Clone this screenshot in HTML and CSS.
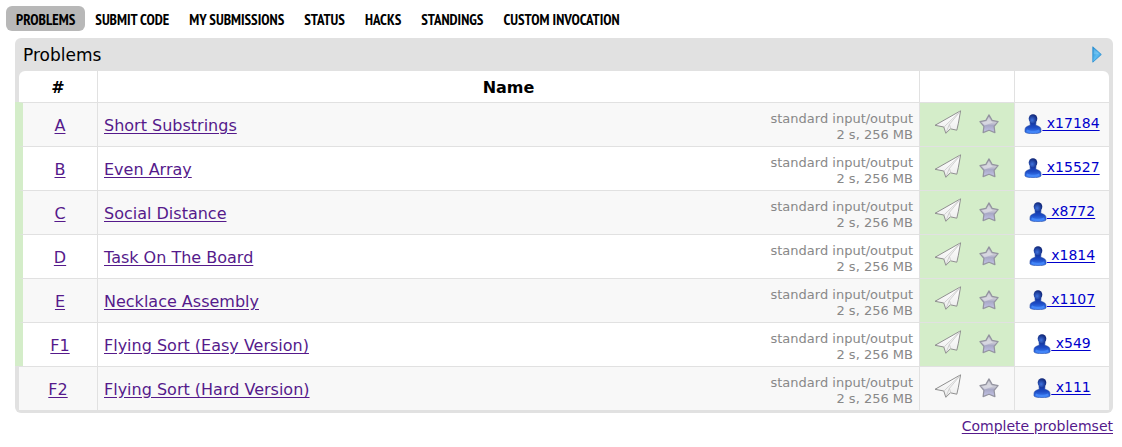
FILE: index.html
```html
<!DOCTYPE html>
<html lang="en">
<head>
<meta charset="utf-8">
<title>Problems</title>
<link rel="stylesheet" href="styles.css">
</head>
<body>
<svg class="sprites" aria-hidden="true">
  <defs>
    <linearGradient id="paper" x1="0" y1="0" x2="0" y2="1">
      <stop offset="0" stop-color="#fff"/><stop offset="1" stop-color="#ececec"/>
    </linearGradient>
    <linearGradient id="metal" x1="0" y1="0" x2="0" y2="1">
      <stop offset="0" stop-color="#b0b0ba"/><stop offset=".45" stop-color="#c9c9d4"/><stop offset=".6" stop-color="#a9a9c6"/><stop offset="1" stop-color="#c4c4e8"/>
    </linearGradient>
    <linearGradient id="body" x1="0" y1="0" x2="0" y2="1">
      <stop offset="0" stop-color="#10309a"/><stop offset=".5" stop-color="#1d4cc6"/><stop offset="1" stop-color="#3f86fb"/>
    </linearGradient>
    <radialGradient id="head" cx=".4" cy=".65" r=".65">
      <stop offset="0" stop-color="#3f72de"/><stop offset="1" stop-color="#0d2274"/>
    </radialGradient>
    <linearGradient id="sky" x1="0" y1="0" x2="1" y2="1">
      <stop offset="0" stop-color="#1d86cc"/><stop offset=".5" stop-color="#5cbcf2"/><stop offset="1" stop-color="#2f97dc"/>
    </linearGradient>
  </defs>
  <symbol id="plane" viewBox="0 0 28 24">
    <path d="M26.6.8 1 15.3l8.8 1.7 2 6.3 4.6-4.5 6.4 1.4 1.6-7z" fill="url(#paper)" stroke="#8f8f8f" stroke-linejoin="round"/>
    <path d="M26 1.5 10.2 16.8M25.8 2 15.4 14.4l1.4 4.3M15.4 14.4l-3.2 7.8" fill="none" stroke="#c6c6c6" stroke-width=".8"/>
  </symbol>
  <symbol id="star" viewBox="0 0 20 20">
    <path d="m10 .9 3.1 5.5 6 1.2-4 4.8.8 6.2-5.9-2.3-5.9 2.3.8-6.2-4-4.8 6-1.2z" fill="url(#metal)" stroke="#9494a0" stroke-width="1.2" stroke-linejoin="round"/>
    <path d="M9.8 3.2 7.6 7.3 3.2 8.4l2.4 3 8.4-3-2-1.3z" fill="#e6e6ec" opacity=".55"/>
  </symbol>
  <symbol id="user" viewBox="0 0 18 20">
    <path d="M6 7.5h6l-.2 3.8c3 .7 5.2 2 5.2 4.4V18c-1.8 2.3-14.2 2.3-16 0v-2.3c0-2.4 2.2-3.7 5.2-4.4z" fill="url(#body)" stroke="#2448a4" stroke-width=".6"/>
    <path d="M3.2 15.5C6 17.2 12 17.2 14.8 15.5c1 1 .8 2 0 2.5-2.8 1.2-8.8 1.2-11.6 0-.8-.5-1-1.5 0-2.5z" fill="#4d90ff" opacity=".65"/>
    <ellipse cx="9" cy="4.8" rx="4.3" ry="4.6" fill="url(#head)"/>
  </symbol>
  <symbol id="arrow" viewBox="0 0 10 17">
    <path d="M.8.8v15.4L9.3 8.5z" fill="url(#sky)" stroke="#3293d3" stroke-width=".9" stroke-linejoin="round"/>
    <path d="M1.7 2.7v5.6h5.6z" fill="#8dd2f8" opacity=".45"/>
  </symbol>
</svg>
<nav class="menu">
  <a class="current" href="#">PROBLEMS</a>
  <a href="#">SUBMIT CODE</a>
  <a href="#">MY SUBMISSIONS</a>
  <a href="#">STATUS</a>
  <a href="#">HACKS</a>
  <a href="#">STANDINGS</a>
  <a href="#">CUSTOM INVOCATION</a>
</nav>
<main>
  <section class="datatable">
    <header class="caption">
      <span>Problems</span>
      <button type="button" aria-label="Filter"><svg class="arrow"><use href="#arrow"/></svg></button>
    </header>
    <table>
      <colgroup><col class="col-id"><col><col class="col-actions"><col class="col-solved"></colgroup>
      <thead><tr><th>#</th><th>Name</th><th></th><th></th></tr></thead>
      <tbody>
        <tr class="accepted">
          <td class="id"><a href="#">A</a></td>
          <td><div class="name"><a href="#">Short Substrings</a><div class="limits">standard input/output<br>2 s, 256 MB</div></div></td>
          <td class="act"><div class="actions"><button type="button" aria-label="Submit"><svg class="plane"><use href="#plane"/></svg></button><button type="button" aria-label="Favourite"><svg class="star"><use href="#star"/></svg></button></div></td>
          <td class="solved"><a href="#"><svg class="user"><use href="#user"/></svg>&nbsp;x17184</a></td>
        </tr>
        <tr class="accepted">
          <td class="id"><a href="#">B</a></td>
          <td><div class="name"><a href="#">Even Array</a><div class="limits">standard input/output<br>2 s, 256 MB</div></div></td>
          <td class="act"><div class="actions"><button type="button" aria-label="Submit"><svg class="plane"><use href="#plane"/></svg></button><button type="button" aria-label="Favourite"><svg class="star"><use href="#star"/></svg></button></div></td>
          <td class="solved"><a href="#"><svg class="user"><use href="#user"/></svg>&nbsp;x15527</a></td>
        </tr>
        <tr class="accepted">
          <td class="id"><a href="#">C</a></td>
          <td><div class="name"><a href="#">Social Distance</a><div class="limits">standard input/output<br>2 s, 256 MB</div></div></td>
          <td class="act"><div class="actions"><button type="button" aria-label="Submit"><svg class="plane"><use href="#plane"/></svg></button><button type="button" aria-label="Favourite"><svg class="star"><use href="#star"/></svg></button></div></td>
          <td class="solved"><a href="#"><svg class="user"><use href="#user"/></svg>&nbsp;x8772</a></td>
        </tr>
        <tr class="accepted">
          <td class="id"><a href="#">D</a></td>
          <td><div class="name"><a href="#">Task On The Board</a><div class="limits">standard input/output<br>2 s, 256 MB</div></div></td>
          <td class="act"><div class="actions"><button type="button" aria-label="Submit"><svg class="plane"><use href="#plane"/></svg></button><button type="button" aria-label="Favourite"><svg class="star"><use href="#star"/></svg></button></div></td>
          <td class="solved"><a href="#"><svg class="user"><use href="#user"/></svg>&nbsp;x1814</a></td>
        </tr>
        <tr class="accepted">
          <td class="id"><a href="#">E</a></td>
          <td><div class="name"><a href="#">Necklace Assembly</a><div class="limits">standard input/output<br>2 s, 256 MB</div></div></td>
          <td class="act"><div class="actions"><button type="button" aria-label="Submit"><svg class="plane"><use href="#plane"/></svg></button><button type="button" aria-label="Favourite"><svg class="star"><use href="#star"/></svg></button></div></td>
          <td class="solved"><a href="#"><svg class="user"><use href="#user"/></svg>&nbsp;x1107</a></td>
        </tr>
        <tr class="accepted">
          <td class="id"><a href="#">F1</a></td>
          <td><div class="name"><a href="#">Flying Sort (Easy Version)</a><div class="limits">standard input/output<br>2 s, 256 MB</div></div></td>
          <td class="act"><div class="actions"><button type="button" aria-label="Submit"><svg class="plane"><use href="#plane"/></svg></button><button type="button" aria-label="Favourite"><svg class="star"><use href="#star"/></svg></button></div></td>
          <td class="solved"><a href="#"><svg class="user"><use href="#user"/></svg>&nbsp;x549</a></td>
        </tr>
        <tr>
          <td class="id"><a href="#">F2</a></td>
          <td><div class="name"><a href="#">Flying Sort (Hard Version)</a><div class="limits">standard input/output<br>2 s, 256 MB</div></div></td>
          <td class="act"><div class="actions"><button type="button" aria-label="Submit"><svg class="plane"><use href="#plane"/></svg></button><button type="button" aria-label="Favourite"><svg class="star"><use href="#star"/></svg></button></div></td>
          <td class="solved"><a href="#"><svg class="user"><use href="#user"/></svg>&nbsp;x111</a></td>
        </tr>
      </tbody>
    </table>
  </section>
  <div class="more"><a href="#">Complete problemset</a></div>
</main>
</body>
</html>
```
FILE: styles.css
```css
* { box-sizing: border-box; }
body {
  margin: 0;
  padding: 6px 9px 0 6px;
  background: #fff;
  color: #000;
  font-family: Verdana, "DejaVu Sans", sans-serif;
  font-size: 16px;
}
a { color: #551a8b; text-underline-offset: 2px; }
button { display: block; padding: 0; border: 0; background: none; cursor: pointer; }
svg { display: block; }
.sprites { position: absolute; width: 0; height: 0; }

.menu { display: flex; }
.menu a {
  padding: 2px 10px 0;
  border-radius: 6px;
  color: #000;
  font: bold 15px/23px "PT Sans Narrow", "Liberation Sans Narrow", "Open Sans Condensed", "Roboto Condensed", "DejaVu Sans Condensed", sans-serif;
  text-decoration: none;
  white-space: nowrap;
}
.menu .current { background: #b8b8b8; }

main { padding: 7px 0 0 9px; }
.datatable {
  padding: 0 4px 3px;
  border-radius: 6px;
  background: #e1e1e1;
}
.caption {
  display: flex;
  align-items: center;
  justify-content: space-between;
  height: 33px;
  padding: 0 7px 0 4px;
  font-size: 17px;
}
.arrow { width: 10px; height: 17px; }

table {
  width: 100%;
  table-layout: fixed;
  border-spacing: 0;
}
.col-id { width: 78px; }
.col-actions { width: 95px; }
.col-solved { width: 95px; }
th, td {
  padding: 0;
  border-left: 1px solid #e1e1e1;
  background: #fff;
  text-align: center;
}
th { height: 31px; padding-top: 2px; }
th:first-child, td:first-child { border-left: 0; }
th:first-child { border-top-left-radius: 6px; }
th:last-child { border-top-right-radius: 6px; }
td { height: 44px; border-top: 1px solid #e1e1e1; }
td.id { padding-top: 2px; }
tbody tr:nth-child(odd) td { background: #f8f8f8; }
.accepted td.id {
  border-left: 4px solid #d4edc9;
  box-shadow: -4px 0 #d4edc9;
}
tbody .accepted td.act { background: #d4edc9; }
.name {
  display: flex;
  align-items: center;
  justify-content: space-between;
  padding: 2px 6px 0;
}
.limits {
  padding-top: 2px;
  color: #888;
  font-size: 13px;
  line-height: 16px;
  text-align: right;
}
.actions {
  display: flex;
  align-items: center;
  justify-content: center;
  gap: 17px;
  padding: 0 2px 2px 0;
}
.plane { width: 28px; height: 24px; margin-bottom: 4px; }
.star { width: 20px; height: 20px; }
.user { display: inline-block; width: 18px; height: 20px; vertical-align: -6px; }
.solved { padding-bottom: 2px; }
.solved a { color: #0000cc; font-size: 14px; white-space: nowrap; }
.more { padding-top: 5px; font-size: 14px; text-align: right; }
```
